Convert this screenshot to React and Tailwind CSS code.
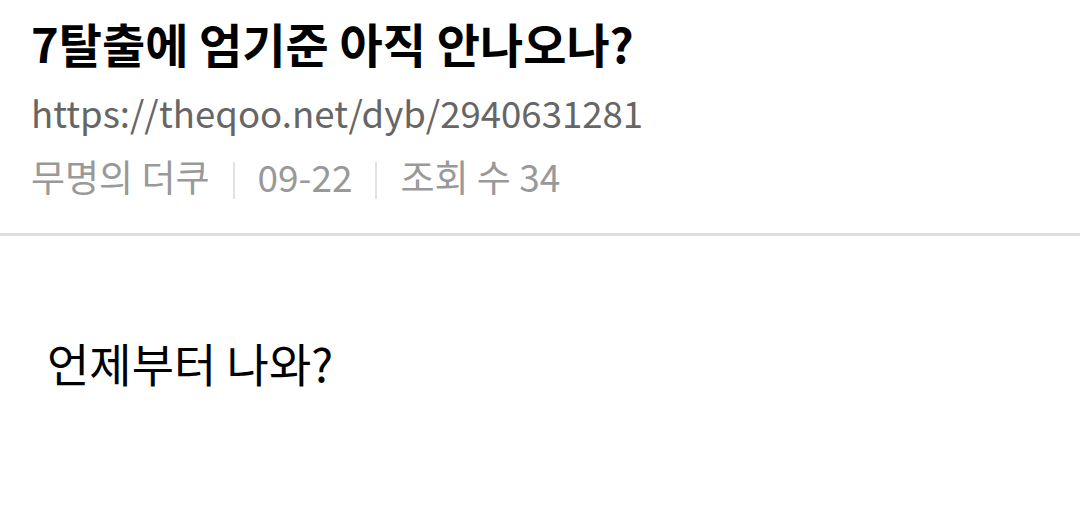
export default function App() {
  const f = { fontFamily: '"Noto Sans CJK KR", "Noto Sans", sans-serif' };
  return (
    <div className="w-[1080px] h-[517px] bg-white overflow-hidden" style={f}>
      <div className="px-[31px] pt-[11px] pb-[31px] border-b-[3px] border-[#dddddd]">
        <h1 className="text-[47px] leading-[64px] font-bold text-black whitespace-nowrap">7탈출에 엄기준 아직 안나오나?</h1>
        <div className="text-[36.6px] leading-[75px] text-[#666666] whitespace-nowrap">https://theqoo.net/dyb/2940631281</div>
        <div className="flex items-center text-[37px] leading-[52px] text-[#999999] whitespace-nowrap">
          <span>무명의 더쿠</span>
          <span className="mx-[23px] w-[2px] h-[37px] mt-[8px] bg-[#e2e2e2]"></span>
          <span>09-22</span>
          <span className="mx-[23px] w-[2px] h-[37px] mt-[8px] bg-[#e2e2e2]"></span>
          <span>조회 수 34</span>
        </div>
      </div>
      <div className="px-[47px] pt-[96px] text-[46px] leading-[60px] text-black whitespace-nowrap">언제부터 나와?</div>
    </div>
  );
}
